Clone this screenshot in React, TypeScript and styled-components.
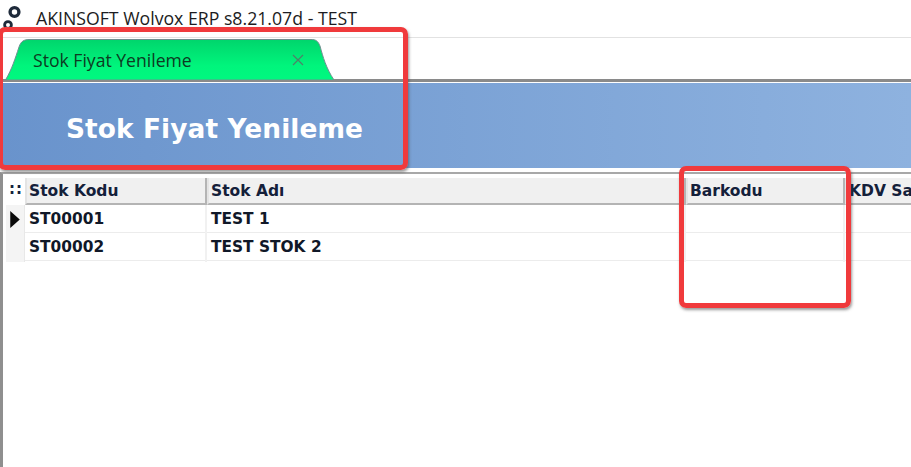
import React from "react";
import styled, { createGlobalStyle } from "styled-components";

const GlobalStyle = createGlobalStyle`
  html, body {
    margin: 0;
    padding: 0;
    background: #fff;
    overflow: hidden;
  }
`;

const Screen = styled.div`
  position: relative;
  width: 911px;
  height: 467px;
  overflow: hidden;
  background: #fff;
  display: flex;
  flex-direction: column;
`;

const TitleBar = styled.div`
  height: 37px;
  flex: none;
  display: flex;
  align-items: flex-start;
  border-bottom: 1px solid #e2e2e2;
`;

const Logo = styled.svg`
  width: 24px;
  height: 32px;
  margin: 3px 0 0 2px;
  flex: none;
`;

const AppTitle = styled.div`
  margin: 6px 0 0 10px;
  font-family: "Open Sans", "Noto Sans", sans-serif;
  font-size: 17.7px;
  line-height: 24px;
  color: #1c1c22;
  white-space: nowrap;
`;

const TabStrip = styled.div`
  height: 41px;
  flex: none;
  padding-left: 5px;
  border-bottom: 3px solid #8a8a8a;
  display: flex;
  align-items: flex-end;
`;

const Tab = styled.div`
  position: relative;
  width: 329px;
  height: 41px;
  margin-bottom: -1px;
  display: flex;
  align-items: center;
  justify-content: space-between;
  padding: 0 30px 0 28px;
  box-sizing: border-box;
  font-family: "Open Sans", "Noto Sans", sans-serif;
  font-size: 17.6px;
  color: #0d3b22;
`;

const TabShape = styled.svg`
  position: absolute;
  inset: 0;
  width: 100%;
  height: 100%;
`;

const TabLabel = styled.span`
  position: relative;
  white-space: nowrap;
`;

const TabClose = styled.svg`
  position: relative;
  width: 12px;
  height: 12px;
`;

const Banner = styled.div`
  height: 85px;
  flex: none;
  margin-top: 1px;
  display: flex;
  align-items: center;
  padding: 0 0 0 66px;
  background: linear-gradient(90deg, #6993cc 0%, #8eb2df 100%);
`;

const BannerTitle = styled.h1`
  margin: 6px 0 0;
  font-family: "DejaVu Sans", sans-serif;
  font-weight: 700;
  font-size: 26.4px;
  letter-spacing: 0.1px;
  color: #fff;
  white-space: nowrap;
`;

const GridArea = styled.div`
  flex: 1;
  margin-top: 4px;
  border-top: 2px solid #a8a8a8;
  border-left: 3px solid #8f8f8f;
  padding: 4px 0 0 3px;
`;

const columns = "19px 182px 479px 159px 82px";

const HeaderRow = styled.div`
  display: grid;
  grid-template-columns: ${columns};
  height: 27px;
`;

const HeaderCell = styled.div<{ $cut?: boolean }>`
  box-sizing: border-box;
  padding-left: 2px;
  background: #f0f0f0;
  border-left: 2px solid #e4e4e4;
  border-right: ${(p) => (p.$cut ? "none" : "2px solid #b4b4b4")};
  border-bottom: 2px solid #b4b4b4;
  font-family: "DejaVu Sans", sans-serif;
  font-weight: 700;
  font-size: 15.5px;
  line-height: 26px;
  color: #14203a;
  white-space: nowrap;
  overflow: hidden;
`;

const Dots = styled(HeaderCell)`
  border: none;
  background: #fff;
  padding-left: 3px;
  font-size: 15px;
  letter-spacing: 1px;
  line-height: 22px;
`;

const Row = styled.div`
  display: grid;
  grid-template-columns: ${columns};
  height: 28px;
  border-bottom: 1px solid #ececec;
  box-sizing: border-box;
`;

const Indicator = styled.div`
  background: #f4f4f4;
  border-right: 1px solid #e8e8e8;
  display: flex;
  align-items: center;
  padding-left: 4px;
`;

const Arrow = styled.svg`
  width: 10px;
  height: 17px;
`;

const Cell = styled.div`
  box-sizing: border-box;
  padding-left: 4px;
  border-right: 2px solid #f1f1f1;
  font-family: "DejaVu Sans", sans-serif;
  font-weight: 700;
  font-size: 15.4px;
  line-height: 29px;
  color: #101828;
  white-space: nowrap;
`;

/* red boxes drawn on top of the screenshot */
const Callout = styled.div<{ $x: number; $y: number; $w: number; $h: number }>`
  position: absolute;
  left: ${(p) => p.$x}px;
  top: ${(p) => p.$y}px;
  width: ${(p) => p.$w}px;
  height: ${(p) => p.$h}px;
  box-sizing: border-box;
  border: 5px solid #f03a3c;
  border-radius: 7px;
  box-shadow: 1px 2px 3px rgba(70, 70, 70, 0.55);
`;

const rows = [
  { code: "ST00001", name: "TEST 1", active: true },
  { code: "ST00002", name: "TEST STOK 2", active: false },
];

export default function App() {
  return (
    <Screen>
      <GlobalStyle />
      <TitleBar>
        <Logo viewBox="0 0 24 32">
          <circle cx="12.5" cy="9" r="4.4" fill="none" stroke="#1e2a3a" strokeWidth="3.4" />
          <circle cx="6" cy="22" r="3.4" fill="none" stroke="#1e2a3a" strokeWidth="2.8" />
        </Logo>
        <AppTitle>AKINSOFT Wolvox ERP s8.21.07d - TEST</AppTitle>
      </TitleBar>
      <TabStrip>
        <Tab>
          <TabShape viewBox="0 0 329 41">
            <defs>
              <linearGradient id="tabFill" x1="0" y1="0" x2="0" y2="1">
                <stop offset="0" stopColor="#00d56c" />
                <stop offset="0.65" stopColor="#00f57c" />
                <stop offset="1" stopColor="#00f880" />
              </linearGradient>
            </defs>
            <path
              d="M0.5 41 C7 30 10 20 14 8 C16 2 19 0.5 25 0.5 L306 0.5 C311 0.5 313 2 315 7 C318 18 321 29 329 41 Z"
              fill="url(#tabFill)"
              stroke="#6f8f90"
              strokeWidth="1"
            />
          </TabShape>
          <TabLabel>Stok Fiyat Yenileme</TabLabel>
          <TabClose viewBox="0 0 12 12">
            <path d="M1 1 L11 11 M11 1 L1 11" stroke="#4f8068" strokeWidth="1.2" fill="none" />
          </TabClose>
        </Tab>
      </TabStrip>
      <Banner>
        <BannerTitle>Stok Fiyat Yenileme</BannerTitle>
      </Banner>
      <GridArea>
        <HeaderRow>
          <Dots>::</Dots>
          <HeaderCell>Stok Kodu</HeaderCell>
          <HeaderCell>Stok Adı</HeaderCell>
          <HeaderCell>Barkodu</HeaderCell>
          <HeaderCell $cut>KDV Satış</HeaderCell>
        </HeaderRow>
        {rows.map((r) => (
          <Row key={r.code}>
            <Indicator>
              {r.active && (
                <Arrow viewBox="0 0 9 16">
                  <path d="M0 0 L9 8 L0 16 Z" fill="#0a0a0a" />
                </Arrow>
              )}
            </Indicator>
            <Cell>{r.code}</Cell>
            <Cell>{r.name}</Cell>
            <Cell />
            <Cell />
          </Row>
        ))}
      </GridArea>
      <Callout $x={-2} $y={27} $w={410} $h={143} />
      <Callout $x={679} $y={166} $w={172} $h={142} />
    </Screen>
  );
}
